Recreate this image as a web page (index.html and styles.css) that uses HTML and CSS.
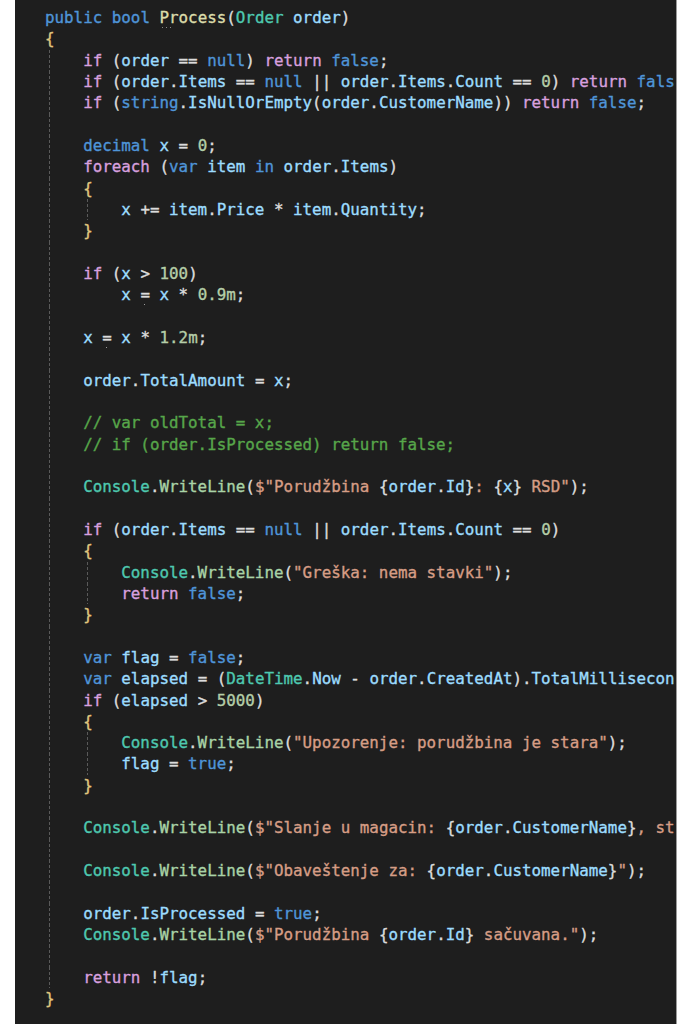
FILE: index.html
```html
<!DOCTYPE html>
<html lang="sr">
<head>
<meta charset="utf-8">
<title>Process</title>
<link rel="stylesheet" href="styles.css">
</head>
<body>
<div class="editor">
<div class="code">
<div class="line"><span class="k">public</span> <span class="k">bool</span> <span class="f hint">Process</span><span class="p">(</span><span class="t">Order</span> <span class="v">order</span><span class="p">)</span></div>
<div class="line"><span class="b">{</span></div>
<div class="line"><span class="g"></span><span class="c">if</span> <span class="p">(</span><span class="v">order</span> <span class="p">==</span> <span class="k">null</span><span class="p">)</span> <span class="c">return</span> <span class="k">false</span><span class="p">;</span></div>
<div class="line"><span class="g"></span><span class="c">if</span> <span class="p">(</span><span class="v">order</span><span class="p">.</span><span class="v">Items</span> <span class="p">==</span> <span class="k">null</span> <span class="p">||</span> <span class="v">order</span><span class="p">.</span><span class="v">Items</span><span class="p">.</span><span class="v">Count</span> <span class="p">==</span> <span class="n">0</span><span class="p">)</span> <span class="c">return</span> <span class="k">fals</span></div>
<div class="line"><span class="g"></span><span class="c">if</span> <span class="p">(</span><span class="k">string</span><span class="p">.</span><span class="v">IsNullOrEmpty</span><span class="p">(</span><span class="v">order</span><span class="p">.</span><span class="v">CustomerName</span><span class="p">))</span> <span class="c">return</span> <span class="k">false</span><span class="p">;</span></div>
<div class="line"><span class="g"></span></div>
<div class="line"><span class="g"></span><span class="k">decimal</span> <span class="v">x</span> <span class="p">=</span> <span class="n">0</span><span class="p">;</span></div>
<div class="line"><span class="g"></span><span class="c">foreach</span> <span class="p">(</span><span class="k">var</span> <span class="v">item</span> <span class="k">in</span> <span class="v">order</span><span class="p">.</span><span class="v">Items</span><span class="p">)</span></div>
<div class="line"><span class="g"></span><span class="b">{</span></div>
<div class="line"><span class="g"></span><span class="g"></span><span class="v">x</span> <span class="p">+=</span> <span class="v">item</span><span class="p">.</span><span class="v">Price</span> <span class="p">*</span> <span class="v">item</span><span class="p">.</span><span class="v">Quantity</span><span class="p">;</span></div>
<div class="line"><span class="g"></span><span class="b">}</span></div>
<div class="line"><span class="g"></span></div>
<div class="line"><span class="g"></span><span class="c">if</span> <span class="p">(</span><span class="v">x</span> <span class="p">&gt;</span> <span class="n">100</span><span class="p">)</span></div>
<div class="line"><span class="g"></span><span class="sp"></span><span class="v">x</span> <span class="p dot">=</span> <span class="v">x</span> <span class="p">*</span> <span class="n">0.9m</span><span class="p">;</span></div>
<div class="line"><span class="g"></span></div>
<div class="line"><span class="g"></span><span class="v">x</span> <span class="p dot">=</span> <span class="v">x</span> <span class="p">*</span> <span class="n">1.2m</span><span class="p">;</span></div>
<div class="line"><span class="g"></span></div>
<div class="line"><span class="g"></span><span class="v">order</span><span class="p">.</span><span class="v">TotalAmount</span> <span class="p">=</span> <span class="v">x</span><span class="p">;</span></div>
<div class="line"><span class="g"></span></div>
<div class="line"><span class="g"></span><span class="m">// var oldTotal = x;</span></div>
<div class="line"><span class="g"></span><span class="m">// if (order.IsProcessed) return false;</span></div>
<div class="line"><span class="g"></span></div>
<div class="line"><span class="g"></span><span class="t">Console</span><span class="p">.</span><span class="w">WriteLine</span><span class="p">(</span><span class="s">$"Porudžbina </span><span class="p">{</span><span class="v">order</span><span class="p">.</span><span class="v">Id</span><span class="p">}</span><span class="s">: </span><span class="p">{</span><span class="v">x</span><span class="p">}</span><span class="s"> RSD"</span><span class="p">);</span></div>
<div class="line"><span class="g"></span></div>
<div class="line"><span class="g"></span><span class="c">if</span> <span class="p">(</span><span class="v">order</span><span class="p">.</span><span class="v">Items</span> <span class="p">==</span> <span class="k">null</span> <span class="p">||</span> <span class="v">order</span><span class="p">.</span><span class="v">Items</span><span class="p">.</span><span class="v">Count</span> <span class="p">==</span> <span class="n">0</span><span class="p">)</span></div>
<div class="line"><span class="g"></span><span class="b">{</span></div>
<div class="line"><span class="g"></span><span class="g"></span><span class="t">Console</span><span class="p">.</span><span class="w">WriteLine</span><span class="p">(</span><span class="s">"Greška: nema stavki"</span><span class="p">);</span></div>
<div class="line"><span class="g"></span><span class="g"></span><span class="c">return</span> <span class="k">false</span><span class="p">;</span></div>
<div class="line"><span class="g"></span><span class="b">}</span></div>
<div class="line"><span class="g"></span></div>
<div class="line"><span class="g"></span><span class="k">var</span> <span class="v">flag</span> <span class="p">=</span> <span class="k">false</span><span class="p">;</span></div>
<div class="line"><span class="g"></span><span class="k">var</span> <span class="v">elapsed</span> <span class="p">= (</span><span class="t">DateTime</span><span class="p">.</span><span class="v">Now</span> <span class="p">-</span> <span class="v">order</span><span class="p">.</span><span class="v">CreatedAt</span><span class="p">).</span><span class="v">TotalMillisecon</span></div>
<div class="line"><span class="g"></span><span class="c">if</span> <span class="p">(</span><span class="v">elapsed</span> <span class="p">&gt;</span> <span class="n">5000</span><span class="p">)</span></div>
<div class="line"><span class="g"></span><span class="b">{</span></div>
<div class="line"><span class="g"></span><span class="g"></span><span class="t">Console</span><span class="p">.</span><span class="w">WriteLine</span><span class="p">(</span><span class="s">"Upozorenje: porudžbina je stara"</span><span class="p">);</span></div>
<div class="line"><span class="g"></span><span class="g"></span><span class="v">flag</span> <span class="p">=</span> <span class="k">true</span><span class="p">;</span></div>
<div class="line"><span class="g"></span><span class="b">}</span></div>
<div class="line"><span class="g"></span></div>
<div class="line"><span class="g"></span><span class="t">Console</span><span class="p">.</span><span class="w">WriteLine</span><span class="p">(</span><span class="s">$"Slanje u magacin: </span><span class="p">{</span><span class="v">order</span><span class="p">.</span><span class="v">CustomerName</span><span class="p">}</span><span class="s">, st</span></div>
<div class="line"><span class="g"></span></div>
<div class="line"><span class="g"></span><span class="t">Console</span><span class="p">.</span><span class="w">WriteLine</span><span class="p">(</span><span class="s">$"Obaveštenje za: </span><span class="p">{</span><span class="v">order</span><span class="p">.</span><span class="v">CustomerName</span><span class="p">}</span><span class="s">"</span><span class="p">);</span></div>
<div class="line"><span class="g"></span></div>
<div class="line"><span class="g"></span><span class="v">order</span><span class="p">.</span><span class="v">IsProcessed</span> <span class="p">=</span> <span class="k">true</span><span class="p">;</span></div>
<div class="line"><span class="g"></span><span class="t">Console</span><span class="p">.</span><span class="w">WriteLine</span><span class="p">(</span><span class="s">$"Porudžbina </span><span class="p">{</span><span class="v">order</span><span class="p">.</span><span class="v">Id</span><span class="p">}</span><span class="s"> sačuvana."</span><span class="p">);</span></div>
<div class="line"><span class="g"></span></div>
<div class="line"><span class="g"></span><span class="c">return</span> <span class="p">!</span><span class="v">flag</span><span class="p">;</span></div>
<div class="line"><span class="b">}</span></div>
</div>
</div>
</body>
</html>
```

FILE: styles.css
```css
html, body {
  margin: 0;
  padding: 0;
  background: #ffffff;
}

.editor {
  margin: 0 14px 0 15px;
  height: 1024px;
  background: #1e1e1e;
  overflow: hidden;
  border-right: 1px solid #9a9a9a;
}

.code {
  padding: 7px 0 0 30px;
  font-family: "DejaVu Sans Mono", "Liberation Mono", monospace;
  font-size: 15.85px;
  color: #dcdcdc;
  -webkit-text-stroke: 0.35px currentColor;
}

.line {
  display: block;
  height: 21.33px;
  line-height: 21.33px;
  white-space: pre;
  overflow: hidden;
}

.g,
.sp {
  display: inline-block;
  width: 4ch;
  height: 21.33px;
  vertical-align: top;
  position: relative;
}

.g::before {
  content: "";
  position: absolute;
  left: 4px;
  top: 0;
  bottom: 0;
  width: 1px;
  background: repeating-linear-gradient(to bottom, #5a5a5a 0 3px, transparent 3px 5px);
}

.k { color: #4f95d8; }
.c { color: #d8a0df; }
.t { color: #4ec9b0; }
.f { color: #dcdcaa; }
.w { color: #a9d3a6; }
.v { color: #9cdcfe; }
.n { color: #b5cea8; }
.s { color: #d69d85; }
.m { color: #57a64a; }
.p { color: #dcdcdc; }
.b { color: #e1c77f; }

.hint,
.dot {
  position: relative;
}

.hint::after {
  content: "";
  position: absolute;
  left: 3px;
  top: 19px;
  width: 11px;
  height: 1px;
  background: repeating-linear-gradient(to right, #8a8a8a 0 1px, transparent 1px 4px);
}

.dot::after {
  content: "";
  position: absolute;
  left: 4px;
  top: 19px;
  width: 1px;
  height: 1px;
  background: #9a9a9a;
}
```
